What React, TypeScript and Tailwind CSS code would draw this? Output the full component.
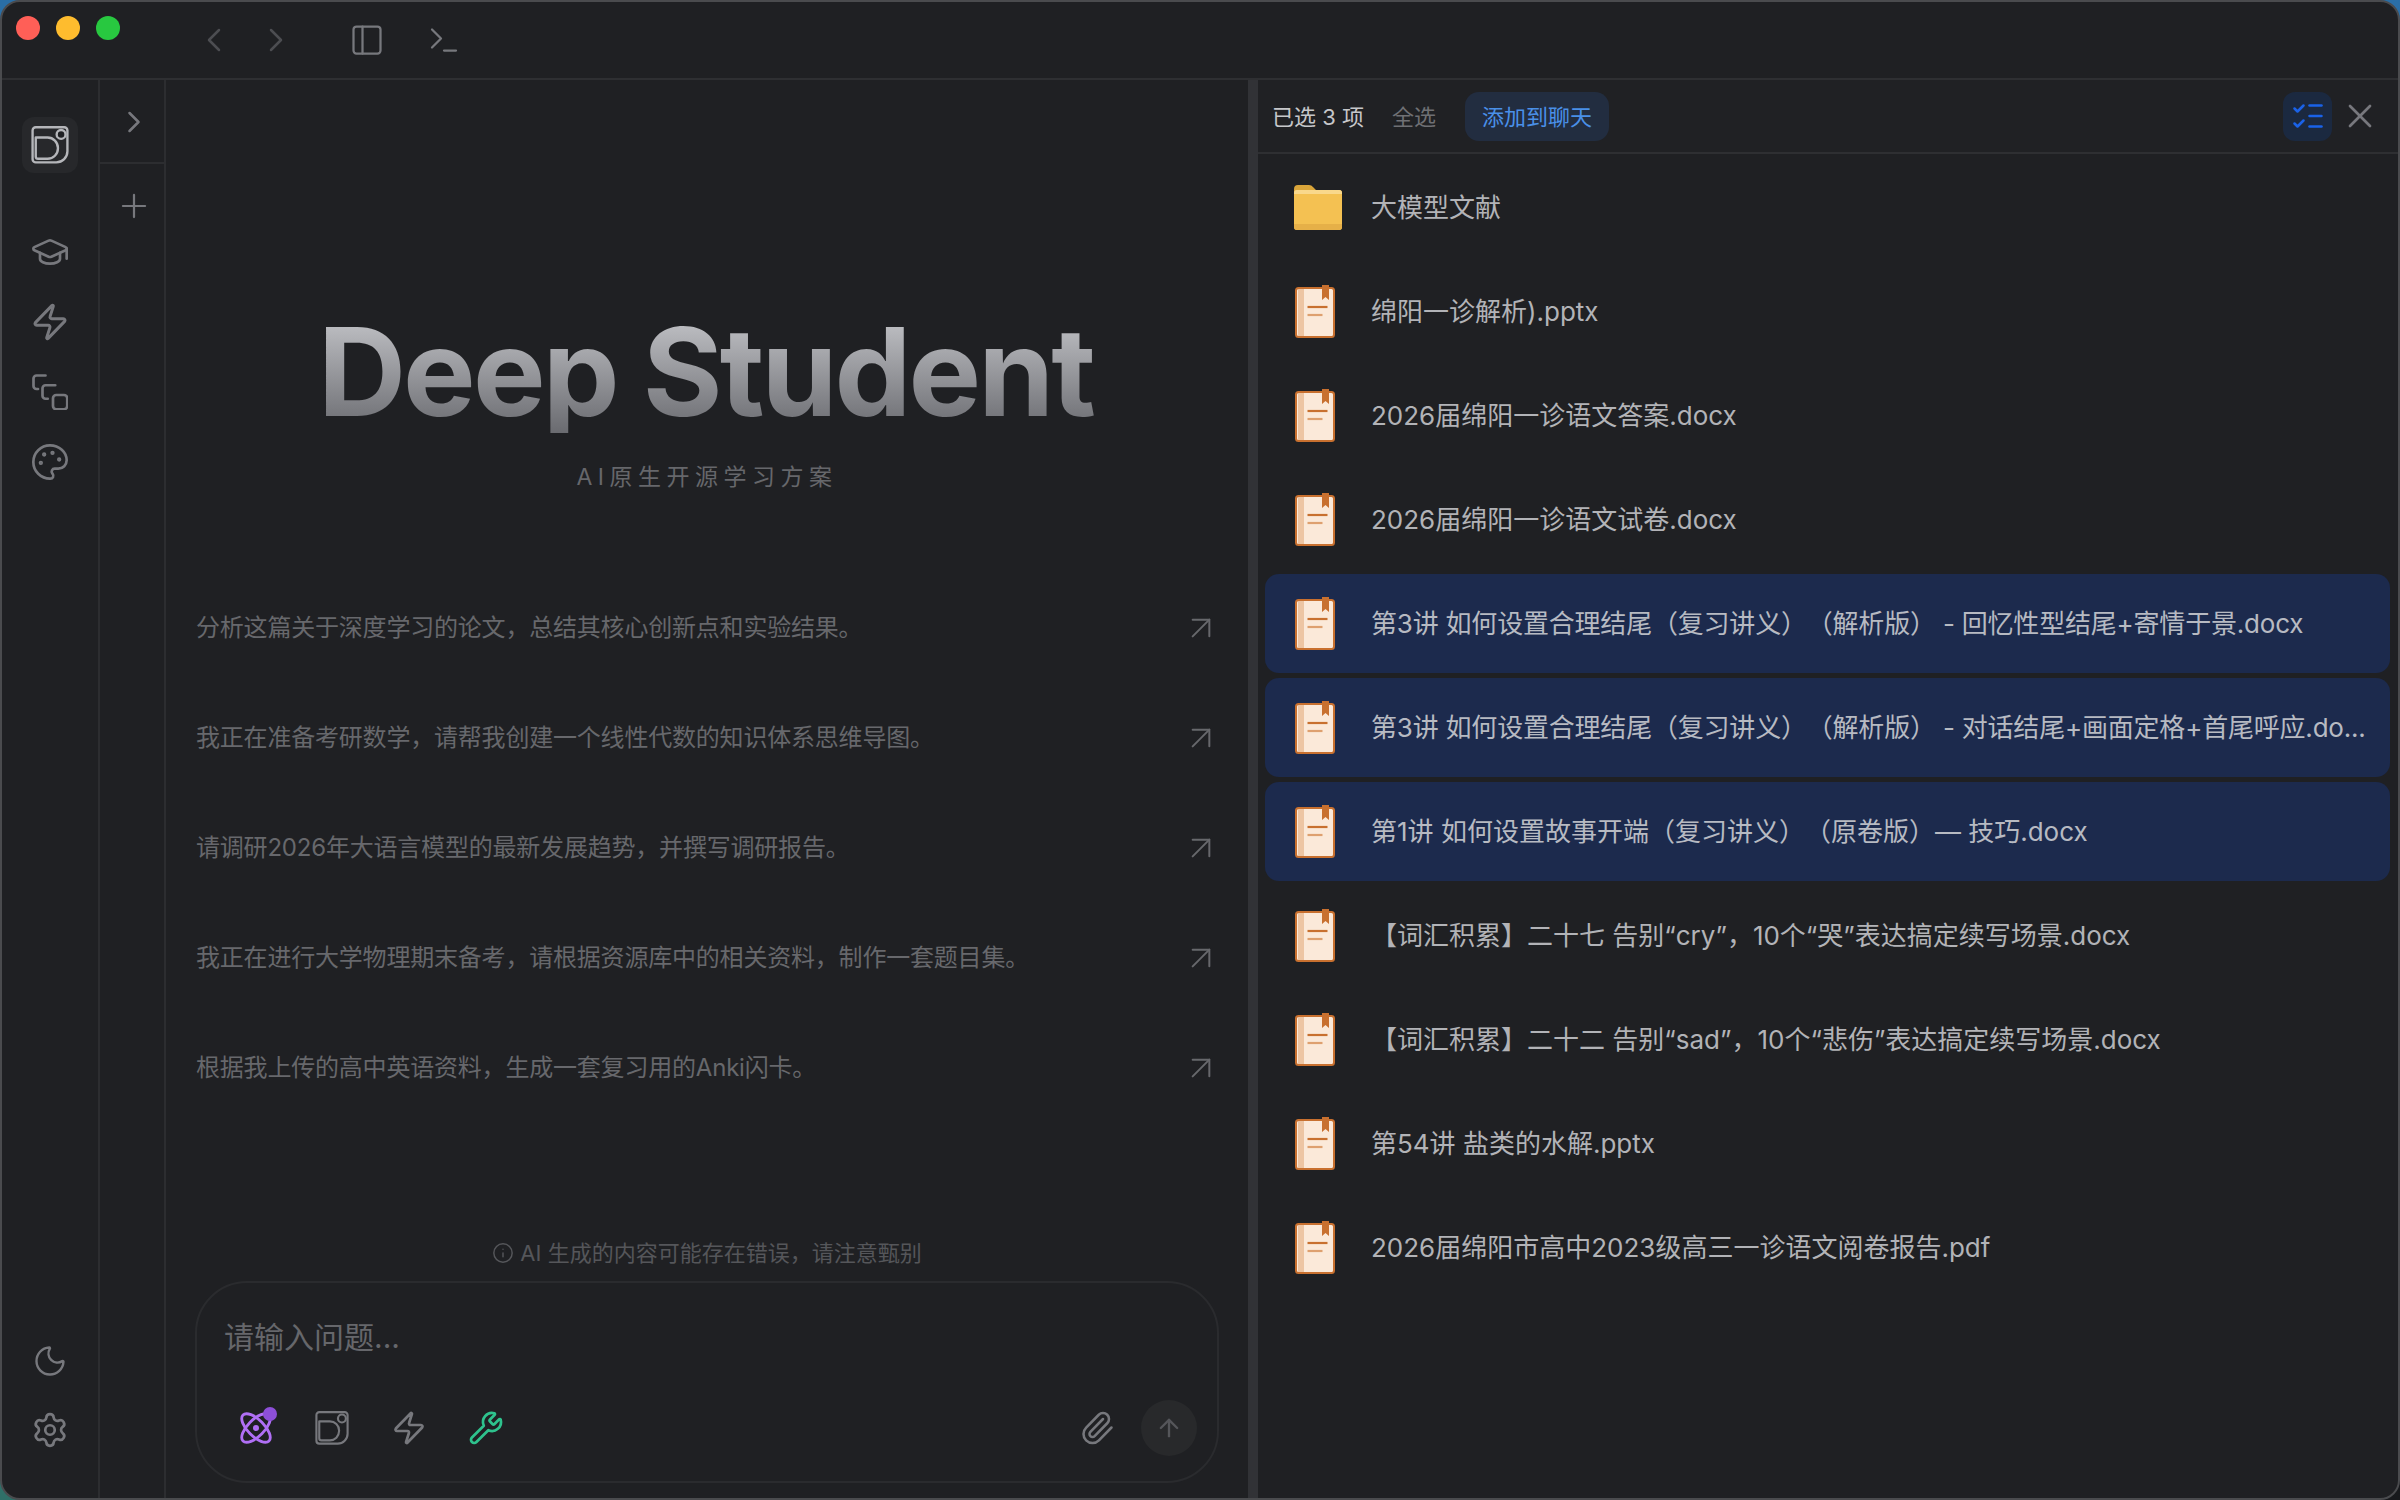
import { ArrowUp, ArrowUpRight, Atom, ChevronLeft, ChevronRight, GraduationCap, Info, ListChecks, Moon, Palette, PanelLeft, Paperclip, Plus, Settings, Terminal, Wrench, X, Zap } from "lucide-react";
import React from "react";

const prompts = [
    "分析这篇关于深度学习的论文，总结其核心创新点和实验结果。",
    "我正在准备考研数学，请帮我创建一个线性代数的知识体系思维导图。",
    "请调研2026年大语言模型的最新发展趋势，并撰写调研报告。",
    "我正在进行大学物理期末备考，请根据资源库中的相关资料，制作一套题目集。",
    "根据我上传的高中英语资料，生成一套复习用的Anki闪卡。",
];

const files = [
    { name: "大模型文献", folder: true },
    { name: "绵阳一诊解析).pptx" },
    { name: "2026届绵阳一诊语文答案.docx" },
    { name: "2026届绵阳一诊语文试卷.docx" },
    { name: "第3讲 如何设置合理结尾（复习讲义）（解析版） - 回忆性型结尾+寄情于景.docx", selected: true, tight: true },
    { name: "第3讲 如何设置合理结尾（复习讲义）（解析版） - 对话结尾+画面定格+首尾呼应.do...", selected: true, tight: true },
    { name: "第1讲 如何设置故事开端（复习讲义）（原卷版）— 技巧.docx", selected: true },
    { name: "【词汇积累】二十七 告别“cry”，10个“哭”表达搞定续写场景.docx" },
    { name: "【词汇积累】二十二 告别“sad”，10个“悲伤”表达搞定续写场景.docx" },
    { name: "第54讲 盐类的水解.pptx" },
    { name: "2026届绵阳市高中2023级高三一诊语文阅卷报告.pdf" },
];

const LogoIcon = ({ className }: { className?: string }) => (
    <svg className={className} viewBox="0 0 24 24" fill="none" stroke="currentColor" strokeWidth={1.5} strokeLinejoin="round">
        <path d="M3 .8h18a2 2 0 0 1 2 2V16a7 7 0 0 1-7 7H3a2 2 0 0 1-2-2V2.800a2 2 0 0 1 2-2z" />
        <path d="M3 7.300h7.500a6.500 6.500 0 0 1 6.500 6.500v.4a6.500 6.500 0 0 1-6.500 6.500H4.500a1.500 1.500 0 0 1-1.500-1.500z" />
        <circle cx="19" cy="5.300" r="2.800" fill="#1f2023" />
    </svg>
);

const PiecesIcon = ({ className }: { className?: string }) => (
    <svg className={className} viewBox="0 0 24 24" fill="none" stroke="currentColor" strokeWidth={1.8} strokeLinecap="round" strokeLinejoin="round">
        <path d="M9 1H3a2 2 0 0 0-2 2v5a2 2 0 0 0 2 2h1" />
        <path d="M15.500 7.500H9a2 2 0 0 0-2 2v5a2 2 0 0 0 2 2h1.500" />
        <rect x="14" y="14" width="9.500" height="9.500" rx="2.200" />
    </svg>
);

const FolderIcon = () => (
    <svg className="w-[48px] h-[45px]" viewBox="0 0 48 45">
        <path d="M0 4a4 4 0 0 1 4-4h11a5 5 0 0 1 4 2l3 3h22a4 4 0 0 1 4 4v6H0z" fill="#d9a53a" />
        <path d="M0 8a3 3 0 0 1 3-3h19l2-.1h21a3 3 0 0 1 3 3V42a3 3 0 0 1-3 3H3a3 3 0 0 1-3-3z" fill="#f4c152" />
        <path d="M0 8a3 3 0 0 1 3-3h42a3 3 0 0 1 3 3v1H0z" fill="#f9d88b" />
        <path d="M0 39h48v3a3 3 0 0 1-3 3H3a3 3 0 0 1-3-3z" fill="#e6b048" />
    </svg>
);

const BookIcon = () => (
    <svg className="w-[40px] h-[53px] ml-[1px]" viewBox="0 0 40 53">
        <rect x="1" y="3" width="38" height="49" rx="2.500" fill="#fbe9d9" />
        <rect x="3" y="4" width="6" height="47" fill="#edc5a3" />
        <rect x="1" y="3" width="38" height="49" rx="2.500" fill="none" stroke="#c8702f" strokeWidth="2" />
        <path d="M27 0h7v15l-3.500-3-3.500 3z" fill="#c8702f" />
        <path d="M12.500 22h20" stroke="#c8702f" strokeWidth="2.200" />
        <path d="M12.500 30h15" stroke="#dea06f" strokeWidth="2.200" />
    </svg>
);

export default function App() {
    return (
        <div className="w-[2400px] h-[1500px] bg-[conic-gradient(#2a6ea6_0deg_90deg,#17191c_90deg_180deg,#2f6f68_180deg_270deg,#2a6ea6_270deg)] overflow-hidden font-['Inter','Noto_Sans_CJK_SC',sans-serif] [text-spacing-trim:space-all]">
            <div className="w-full h-full flex flex-col bg-[#1f2023] rounded-[20px] border-[2px] border-[#4a4b4e] overflow-hidden">
                {/* 标题栏 */}
                <div className="h-[78px] shrink-0 flex items-start border-b-2 border-[#2e2f32]">
                    <div className="flex gap-[16px] pl-[14px] pt-[14px]">
                        <span className="w-[24px] h-[24px] rounded-full bg-[#ff5f57]" />
                        <span className="w-[24px] h-[24px] rounded-full bg-[#febc2e]" />
                        <span className="w-[24px] h-[24px] rounded-full bg-[#28c840]" />
                    </div>
                    <div className="flex items-center pt-[18px] text-[#4c4d51]">
                        <ChevronLeft className="w-[40px] h-[40px] ml-[74px]" strokeWidth={1.5} />
                        <ChevronRight className="w-[40px] h-[40px] ml-[22px]" strokeWidth={1.5} />
                        <PanelLeft className="w-[36px] h-[36px] ml-[53px] text-[#77787d]" strokeWidth={1.5} />
                        <Terminal className="w-[36px] h-[36px] ml-[41px] text-[#77787d]" strokeWidth={1.5} />
                    </div>
                </div>

                <div className="flex-1 flex min-h-0">
                    {/* 主导航 */}
                    <div className="w-[98px] shrink-0 flex flex-col items-center border-r-2 border-[#2c2d30] text-[#77787d]">
                        <div className="mt-[37px] w-[56px] h-[56px] rounded-[12px] bg-[#27282b] flex items-center justify-center text-[#b5b6ba]">
                            <LogoIcon className="w-[38px] h-[38px]" />
                        </div>
                        <GraduationCap className="w-[40px] h-[40px] mt-[59px]" strokeWidth={1.6} />
                        <Zap className="w-[40px] h-[40px] mt-[30px]" strokeWidth={1.8} />
                        <PiecesIcon className="w-[36px] h-[36px] mt-[32px]" />
                        <Palette className="w-[40px] h-[40px] mt-[32px]" strokeWidth={1.6} />
                        <Moon className="w-[36px] h-[36px] mt-auto" strokeWidth={1.6} />
                        <Settings className="w-[38px] h-[38px] mt-[32px] mb-[49px]" strokeWidth={1.7} />
                    </div>

                    {/* 会话栏 */}
                    <div className="w-[66px] shrink-0 flex flex-col border-r-2 border-[#2c2d30] text-[#77787d]">
                        <div className="h-[84px] flex items-center justify-center pt-[2px] pl-[3px] border-b-2 border-[#2c2d30]">
                            <ChevronRight className="w-[36px] h-[36px]" strokeWidth={1.7} />
                        </div>
                        <div className="flex justify-center mt-[23px] pl-[3px]">
                            <Plus className="w-[38px] h-[38px]" strokeWidth={1.4} />
                        </div>
                    </div>

                    {/* 聊天区 */}
                    <div className="flex-1 min-w-0 flex flex-col">
                        <h1 className="mt-[231px] pr-[3px] text-center text-[122px] leading-[122px] font-bold tracking-[-2.900px] bg-gradient-to-b from-[#c6c7cb] to-[#6a6b70] bg-clip-text text-transparent">
                            Deep Student
                        </h1>
                        <div className="mt-[28px] text-center text-[23px] leading-[32px] tracking-[5.500px] text-[#66676b]">AI原生开源学习方案</div>
                        <div className="mt-[80px] flex flex-col pl-[30px] pr-[27px]">
                            {prompts.map((text) => (
                                <div key={text} className="h-[110px] flex items-center justify-between text-[#67686c]">
                                    <span className="text-[24px] tracking-[-0.2px]">{text}</span>
                                    <ArrowUpRight className="w-[40px] h-[40px]" strokeWidth={1.2} />
                                </div>
                            ))}
                        </div>
                        <div className="mt-auto flex items-center justify-center gap-[6px] text-[22px] leading-[30px] text-[#55565a]">
                            <Info className="w-[22px] h-[22px]" strokeWidth={1.6} />
                            AI 生成的内容可能存在错误，请注意甄别
                        </div>
                        <div className="mx-[29px] mt-[13px] mb-[15px] h-[202px] flex flex-col rounded-[52px] border-2 border-[#2a2b2e] pl-[27px] pr-[20px]">
                            <div className="mt-[34px] text-[30px] leading-[40px] text-[#66676b]">请输入问题...</div>
                            <div className="mt-auto mb-[25px] flex items-center">
                                <div className="relative w-[38px] ml-[13px] text-[#b06ff5]">
                                    <Atom className="w-[38px] h-[38px]" strokeWidth={1.8} />
                                    <span className="absolute -top-[2px] right-[-2px] w-[14px] h-[14px] rounded-full bg-[#8d4fd8]" />
                                </div>
                                <LogoIcon className="w-[34px] h-[34px] ml-[40px] text-[#77787d]" />
                                <Zap className="w-[36px] h-[36px] ml-[42px] text-[#77787d]" strokeWidth={1.8} />
                                <Wrench className="w-[36px] h-[36px] ml-[41px] text-[#2ec28d]" strokeWidth={1.8} />
                                <Paperclip className="w-[36px] h-[36px] ml-auto text-[#77787d]" strokeWidth={1.7} />
                                <div className="w-[56px] h-[56px] ml-[26px] rounded-full bg-[#28292b] flex items-center justify-center text-[#55565a]">
                                    <ArrowUp className="w-[28px] h-[28px]" strokeWidth={2} />
                                </div>
                            </div>
                        </div>
                    </div>

                    <div className="w-[10px] shrink-0 bg-[#313236]" />

                    {/* 文件选择 */}
                    <div className="w-[1140px] shrink-0 flex flex-col">
                        <div className="h-[74px] shrink-0 flex items-center pl-[14px] pr-[18px] border-b-2 border-[#2e2f32] bg-[#202124] text-[22px]">
                            <span className="pt-[2px] text-[#c6c7ca]">已选 3 项</span>
                            <span className="pt-[2px] ml-[28px] text-[#6f7074]">全选</span>
                            <span className="pt-[2px] ml-[29px] h-[49px] w-[144px] flex items-center justify-center rounded-[14px] bg-[#222d40] text-[#4a90e8]">添加到聊天</span>
                            <span className="ml-auto w-[49px] h-[49px] flex items-center justify-center rounded-[12px] bg-[#1b2940] text-[#1a62e8]">
                                <ListChecks className="w-[36px] h-[36px]" strokeWidth={1.7} />
                            </span>
                            <X className="w-[40px] h-[40px] ml-[8px] text-[#77787d]" strokeWidth={1.6} />
                        </div>
                        <div className="flex flex-col gap-[5px] pl-[7px] pr-[8px] pt-[4px]">
                            {files.map((file) => (
                                <div key={file.name} className={`h-[99px] flex items-center pl-[29px] pr-[20px] rounded-[14px] ${file.selected ? "bg-[#1c2a4d] text-[#b7bac2]" : "text-[#b2b3b7]"}`}>
                                    <div className="w-[48px] shrink-0">{file.folder ? <FolderIcon /> : <BookIcon />}</div>
                                    <span className={`ml-[29px] whitespace-nowrap text-[26px] leading-[36px] ${file.tight ? "tracking-[-0.2px]" : ""}`}>{file.name}</span>
                                </div>
                            ))}
                        </div>
                    </div>
                </div>
            </div>
        </div>
    );
}
